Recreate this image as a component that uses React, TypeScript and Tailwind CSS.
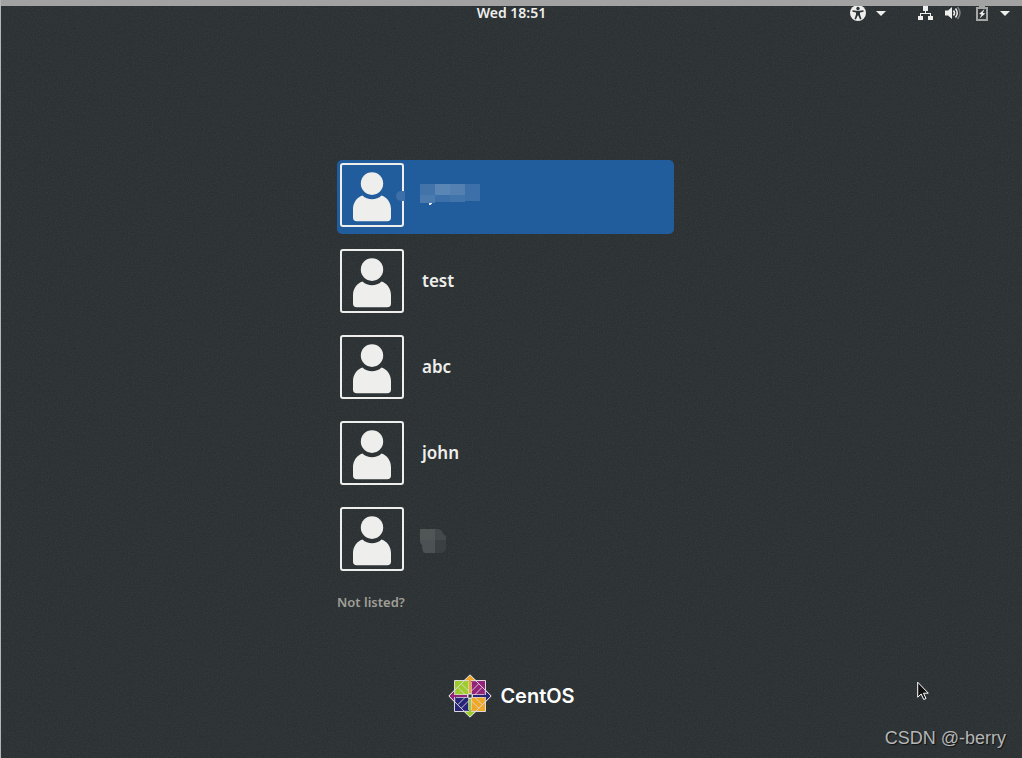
const users = ["", "test", "abc", "john", ""];

const Avatar = () => {
    return (
        <span className="block h-16 w-16 shrink-0 self-start rounded-[3px] border-2 border-[#eeeeec]">
            <svg viewBox="0 0 60 60" className="h-full w-full" fill="#eeeeec" aria-hidden="true">
                <ellipse cx="30" cy="18.600" rx="11.200" ry="11.300" />
                <path d="M20.500 30.500c5 5 14 5 19 0 5.500 1.500 9.500 7.500 9.500 13.500v8.500q0 3.800-3.800 3.800H14.800q-3.800 0-3.800-3.800v-8.500c0-6 4-12 9.500-13.500z" />
            </svg>
        </span>
    );
};

/* hidden name of the selected user */
const SelectedName = () => {
    return (
        <svg className="h-[26px] w-[60px]" viewBox="0 0 60 26" shapeRendering="crispEdges" role="img" aria-label="Hidden user">
            <path fill="#4274aa" d="M0 0h15v11H0z" />
            <path fill="#5a86b5" d="M15 0h15v11H15z" />
            <path fill="#5480b1" d="M30 0h15v11H30z" />
            <path fill="#3d70a8" d="M45 0h15v17H45z" />
            <path fill="#4b7bae" d="M0 11h15v8H0z" />
            <path fill="#3d70a9" d="M15 11h15v7H15z" />
            <path fill="#4174ab" d="M30 11h15v7H30z" />
            <path fill="#eeeeec" d="M9 20v-1h3v1h-1v1H9z" />
        </svg>
    );
};

const HiddenName = () => {
    return (
        <svg className="h-6 w-[26px]" viewBox="0 0 26 24" role="img" aria-label="Hidden user">
            <path fill="#505656" d="M0 0h15v11H0z" />
            <path fill="#4c5253" d="M0 11h15v13H5q-3-1-3-8-2-1-2-5z" />
            <path fill="#43494b" d="M15 0h4l3 2 1 3 3 2v4H15z" />
            <path fill="#3a4042" d="M15 11h11v9q-1 3-4 4h-7z" />
        </svg>
    );
};

const Caret = () => {
    return (
        <svg className="h-[14px] w-[10px]" viewBox="0 0 10 14" fill="#eeeeec" aria-hidden="true">
            <path d="M0 5h10L5 10z" />
        </svg>
    );
};

const CentosMark = () => {
    return (
        <svg className="h-11 w-11" viewBox="0 0 44 44" aria-hidden="true">
            <g stroke="#dcd8dc" strokeWidth="1">
                <path fill="#9ccd2a" d="M6.500 6.500H22V22H6.500z" />
                <path fill="#932279" d="M22 6.500h15.500V22H22z" />
                <path fill="#262577" d="M6.500 22H22v15.500H6.500z" />
                <path fill="#efa724" d="M22 22h15.500v15.500H22z" />
                {/* arrow heads on the four sides */}
                <path fill="#efa724" d="M22 .900l6 5.800H16z" />
                <path fill="#262577" d="M43.100 22l-5.800 6V16z" />
                <path fill="#9ccd2a" d="M22 43.100l-6-5.800h12z" />
                <path fill="#932279" d="M.900 22l5.800-6v12z" />
                {/* diamond and the diagonal arms */}
                <path fill="none" d="M22 .900L43.100 22 22 43.100.900 22z" />
                <path fill="none" strokeWidth=".9" d="M10 13.500L18.500 22M13.500 10L22 18.500M30.500 10L22 18.500M34 13.500L25.500 22M10 30.500L18.500 22M13.500 34L22 25.500M34 30.500L25.500 22M30.500 34L22 25.500" />
            </g>
            <path fill="none" stroke="#dcd8dc" strokeWidth="3.500" d="M22 8v28M8 22h28" />
            <path stroke="#efa724" strokeWidth="2" d="M22 5v14" />
            <path stroke="#262577" strokeWidth="2" d="M25 22h14" />
            <path stroke="#9ccd2a" strokeWidth="2" d="M22 25v14" />
            <path stroke="#932279" strokeWidth="2" d="M5 22h14" />
            <path fill="#2e3436" stroke="#dcd8dc" d="M20 20h4v4h-4z" />
        </svg>
    );
};

const TopBar = () => {
    return (
        <header className="grid h-[14px] grid-cols-3 grid-rows-1 items-center">
            <time className="col-start-2 text-center text-[14px] leading-3 font-semibold">Wed 18:51</time>
            <div className="flex items-center justify-end pr-3">
                <button type="button" aria-label="Accessibility" className="flex items-center gap-2.5">
                    <svg className="h-4 w-4" viewBox="0 0 16 16" aria-hidden="true">
                        <circle cx="8" cy="8" r="8" fill="#eeeeec" />
                        <circle cx="8" cy="3.500" r="1.700" fill="#2e3436" />
                        <path fill="#2e3436" d="M2.500 5.200l4 .600h3l4-.600v1.500l-3.500.800v2l1.500 4.500-1.400.500L8.300 10.500h-.600L5.900 14.500 4.500 14 6 9.500v-2l-3.500-.800z" />
                    </svg>
                    <Caret />
                </button>
                <button type="button" aria-label="System menu" className="ml-8 flex items-center gap-3">
                    <svg className="h-[14px] w-[15px]" viewBox="0 0 15 14" fill="#eeeeec" shapeRendering="crispEdges" aria-hidden="true">
                        <path d="M5 0h5v5H8v2h5v3h2v4h-5v-4h2V8H3v2h2v4H0v-4h2V7h5V5H5z" />
                    </svg>
                    <svg className="h-[14px] w-4" viewBox="0 0 16 14" fill="none" strokeWidth="1.500" aria-hidden="true">
                        <path fill="#eeeeec" d="M0 4.500h3L7 1v12L3 9.500H0z" />
                        <path stroke="#eeeeec" d="M8.500 4.500q2 2.500 0 5M10.500 2.500q3.500 4.500 0 9" />
                        <path stroke="#7c8081" d="M12.500 1q5 6 0 12" />
                    </svg>
                    <svg className="ml-[3px] h-4 w-3" viewBox="0 0 12 16" aria-hidden="true">
                        <path fill="#a4a6a6" fillRule="evenodd" d="M3 0h6v2h3v14H0V2h3zM2 4v10h8V4z" />
                        <path fill="#eeeeec" d="M8.500 4L3 9l2.500.500L3.500 13.500 9.300 8.500 6.800 8z" />
                    </svg>
                    <Caret />
                </button>
            </div>
        </header>
    );
};

const App = () => {
    return (
        <div className="relative flex min-h-screen flex-col overflow-hidden border-l border-[#b4b6b6] bg-[#272d2f] font-['Noto_Sans',sans-serif] text-[#eeeeec]">
            {/* fine noise of the login background */}
            <svg className="pointer-events-none absolute inset-0 h-full w-full opacity-10" aria-hidden="true">
                <filter id="noise">
                    <feTurbulence type="fractalNoise" baseFrequency="0.8" numOctaves="2" />
                    <feColorMatrix type="saturate" values="0" />
                </filter>
                <rect width="100%" height="100%" filter="url(#noise)" />
            </svg>
            <div className="relative z-10 h-1.5 bg-[#a2a2a2]"></div>
            <div className="relative flex grow flex-col">
                <TopBar />
                <main className="mx-auto flex w-[349px] flex-col items-start gap-3 pt-[140px]">
                    {users.map((user, i) => (
                        <button
                            key={i}
                            type="button"
                            className={
                                i === 0
                                    ? "relative flex h-[74px] w-[337px] items-center gap-4 rounded-[5px] bg-[#215d9c] p-[3px]"
                                    : "flex h-[74px] w-[337px] items-center gap-4 rounded-[5px] p-[3px]"
                            }
                        >
                            <Avatar />
                            {i === 0 && <span className="absolute top-[31px] left-[59px] h-[10px] w-[9px] rounded-l-full bg-[#3d70a8]"></span>}
                            {i === 0 && <SelectedName />}
                            {i === 4 && <HiddenName />}
                            {user && <span className="px-0.5 pb-1 text-[17px] leading-6 font-semibold">{user}</span>}
                        </button>
                    ))}
                    <button type="button" className="h-6 text-[13px] leading-6 font-semibold text-[#a09f98]">
                        Not listed?
                    </button>
                </main>
                <footer className="mt-auto flex items-center justify-center gap-2 pb-10">
                    <CentosMark />
                    <span className="font-['Inter',sans-serif] text-[20px] leading-6 font-semibold text-white">CentOS</span>
                </footer>
            </div>
            <svg className="pointer-events-none absolute right-[93px] bottom-[57px] h-5 w-3" viewBox="0 0 12 20" aria-hidden="true">
                <path fill="#111" stroke="#fff" strokeWidth="1" d="M.700 1.200v15l3.500-3.200 2.500 5.500 2.300-1-2.500-5.300h4.800z" />
            </svg>
            <span className="absolute right-4 bottom-2 font-['Liberation_Sans',sans-serif] text-[18px] leading-6 text-[#b4b6b7] [text-shadow:1px_1px_1px_#111]">
                CSDN @-berry
            </span>
        </div>
    );
};

export default App;
